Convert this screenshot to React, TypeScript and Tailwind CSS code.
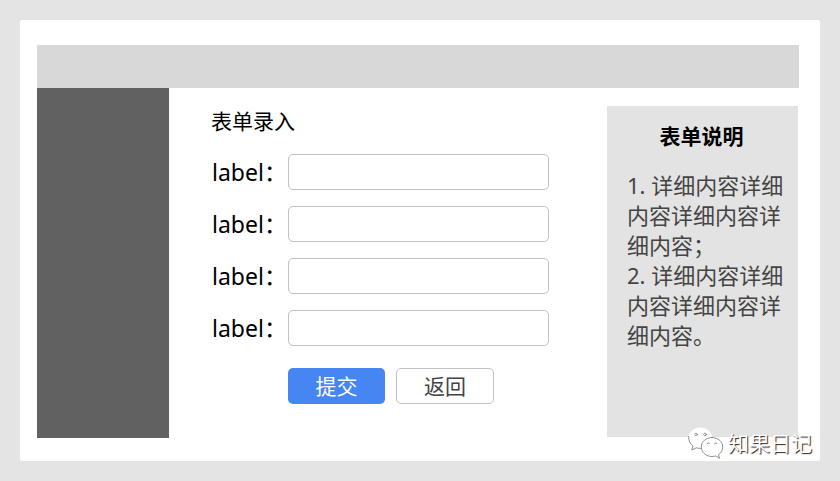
const fields = ["field-1", "field-2", "field-3", "field-4"];

const FormRow = ({ id }: { id: string }) => {
  return (
    <div className="flex items-center">
      <label htmlFor={id} className="w-[77px] shrink-0 whitespace-nowrap pl-px text-[23px] leading-9 text-black">
        label：
      </label>
      <input
        id={id}
        type="text"
        className="h-9 min-w-0 flex-1 rounded-[5px] border border-[#c2c2c2] bg-white px-3 text-lg outline-none focus:border-[#4586f3]"
      />
    </div>
  );
};

const EntryForm = () => {
  return (
    <form className="pt-[15px]" onSubmit={(e) => e.preventDefault()}>
      <h1 className="text-[21px] leading-9 text-black">表单录入</h1>
      <div className="mt-[15px] flex flex-col gap-4">
        {fields.map((id) => (
          <FormRow key={id} id={id} />
        ))}
      </div>
      <div className="mt-[22px] flex gap-[11px] pl-[77px]">
        <button type="submit" className="h-9 w-[97px] rounded-[5px] bg-[#4586f3] text-[21px] leading-8 text-white">
          提交
        </button>
        <button
          type="button"
          className="h-9 w-[98px] rounded-[5px] border border-[#c2c2c2] bg-white text-[21px] leading-8 text-[#444444]"
        >
          返回
        </button>
      </div>
    </form>
  );
};

const FormNotes = () => {
  return (
    <aside className="mt-[18px] mr-px mb-px w-[191px] shrink-0 bg-[#e3e3e3] pt-[15px] pr-3.5 pl-5">
      <h2 className="pr-2 text-center text-[21px] leading-[30px] font-bold text-black">表单说明</h2>
      <div className="mt-[19px] text-[22px] leading-[30px] text-[#444444]">
        <p>1. 详细内容详细内容详细内容详细内容；</p>
        <p>2. 详细内容详细内容详细内容详细内容。</p>
      </div>
    </aside>
  );
};

const Watermark = () => {
  return (
    <div className="absolute right-7 bottom-[22px] flex items-center gap-1">
      <svg viewBox="0 0 36 32" className="h-8 w-9" fill="none" stroke="#777777" strokeWidth="0.8" strokeLinecap="round">
        {/* back bubble, outlined only on its lower left side */}
        <path d="M12.500 .5C6 .5 .500 5.200 .500 11c0 3.200 1.700 6 4.400 7.900L3.800 23l4.700-2.200c1.300.4 2.600.6 4 .6 6.500 0 11.500-4.600 11.500-10.400S19 .5 12.500 .5Z" fill="#ffffff" stroke="none" />
        <path d="M.6 9.500C.500 14 2 16.800 5 19l-1.200 4 4.700-2.200c1.700.5 3 .6 5 .6" />
        <path d="M24 10.500c-6 0-10.700 4.200-10.700 9.500s4.700 9.500 10.700 9.500c1.300 0 2.500-.2 3.700-.6l3.800 2.400-1-3.600c2.500-1.700 4.200-4.400 4.200-7.700 0-5.300-4.700-9.500-10.700-9.500Z" fill="#ffffff" />
        <circle cx="8" cy="7.500" r="1.300" strokeWidth="0.7" />
        <circle cx="17" cy="7.500" r="1.300" strokeWidth="0.7" />
        <path d="M19 17a1.300 1.300 0 0 1 2.500-.3M26.500 17a1.300 1.300 0 0 1 2.500-.3" />
      </svg>
      <span className="text-[21px] leading-8 text-white [text-shadow:1px_1px_1px_#222222]">知果日记</span>
    </div>
  );
};

const App = () => {
  return (
    <div className="relative flex min-h-screen flex-col bg-[#e4e4e4] p-5 font-['Noto_Sans','Noto_Sans_CJK_SC',sans-serif]">
      <div className="flex flex-1 flex-col rounded-xs bg-white pt-[25px] pr-[21px] pb-[23px] pl-[17px]">
        <header className="h-[43px] bg-[#d8d8d8]" />
        <div className="flex flex-1">
          <nav className="w-[132px] shrink-0 bg-[#616161]" />
          <main className="min-w-0 flex-1 pr-[58px] pl-[42px]">
            <EntryForm />
          </main>
          <FormNotes />
        </div>
      </div>
      <Watermark />
    </div>
  );
};

export default App;
